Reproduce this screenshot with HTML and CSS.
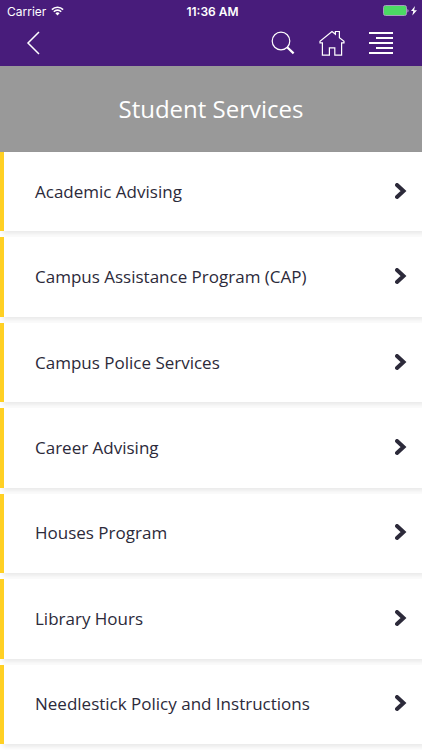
FILE: index.html
```html
<!DOCTYPE html>
<html lang="en">
<head>
  <meta charset="utf-8">
  <meta name="viewport" content="width=device-width, initial-scale=1">
  <title>Student Services</title>
  <link rel="stylesheet" href="styles.css">
</head>
<body>
  <header class="top-bar">
    <div class="status-bar">
      <div class="status-left">
        <span>Carrier</span>
        <svg class="wifi-icon" viewBox="0 0 13 10">
          <path d="M0.9 3.6a8 8 0 0 1 11.2 0M2.8 5.7a5.2 5.2 0 0 1 7.4 0" fill="none" stroke="#fff" stroke-width="1.6"/>
          <path d="M4.4 7.3a3 3 0 0 1 4.2 0L6.5 9.6z" fill="#fff"/>
        </svg>
      </div>
      <div class="status-time">11:36 AM</div>
      <div class="status-right">
        <svg class="battery-icon" viewBox="0 0 36 12">
          <rect x="1.5" y="0.5" width="23" height="10" rx="2" fill="#4cd964" stroke="#a79bc0"/>
          <path d="M25.500 4v3.500a2 2 0 0 0 0-3.500z" fill="#c8bed8"/>
          <path d="M33 1L29 6h2.300l-1 4.500L35 5.200h-2.900z" fill="#fff"/>
        </svg>
      </div>
    </div>
    <nav class="nav-bar">
      <button class="nav-button back-button" aria-label="Back">
        <svg width="14" height="24" viewBox="0 0 14 24"><path d="M13 1L2 12l11 11"/></svg>
      </button>
      <button class="nav-button" aria-label="Search">
        <svg width="24" height="24" viewBox="0 0 24 24">
          <circle cx="10" cy="10" r="8.8" stroke-width="1.2"/>
          <path d="M16.2 16.2l6.4 6.2" stroke-width="2.2"/>
        </svg>
      </button>
      <button class="nav-button" aria-label="Home">
        <svg width="26" height="26" viewBox="0 0 26 26">
          <path d="M3.400 12.800H1V11.300L13 1.500l3.400 2.800V1.500h4v6.200l4.600 3.600v1.500h-2.400v12.400h-6.800v-7.400h-5.400v7.400H3.400z" stroke-width="1.2"/>
        </svg>
      </button>
      <button class="nav-button" aria-label="Menu">
        <svg width="24" height="24" viewBox="0 0 24 24">
          <path d="M0 2h24M7 7h17M0 12h24M7 17h17M0 22h24" stroke-width="2"/>
        </svg>
      </button>
    </nav>
  </header>

  <h1 class="page-title">Student Services</h1>

  <main class="service-list">
    <a class="service-item" href="#">
      <span>Academic Advising</span>
      <svg class="chevron" viewBox="0 0 12 18"><path d="M2 2l6.500 6L2 14"/></svg>
    </a>
    <a class="service-item" href="#">
      <span>Campus Assistance Program (CAP)</span>
      <svg class="chevron" viewBox="0 0 12 18"><path d="M2 2l6.500 6L2 14"/></svg>
    </a>
    <a class="service-item" href="#">
      <span>Campus Police Services</span>
      <svg class="chevron" viewBox="0 0 12 18"><path d="M2 2l6.500 6L2 14"/></svg>
    </a>
    <a class="service-item" href="#">
      <span>Career Advising</span>
      <svg class="chevron" viewBox="0 0 12 18"><path d="M2 2l6.500 6L2 14"/></svg>
    </a>
    <a class="service-item" href="#">
      <span>Houses Program</span>
      <svg class="chevron" viewBox="0 0 12 18"><path d="M2 2l6.500 6L2 14"/></svg>
    </a>
    <a class="service-item" href="#">
      <span>Library Hours</span>
      <svg class="chevron" viewBox="0 0 12 18"><path d="M2 2l6.500 6L2 14"/></svg>
    </a>
    <a class="service-item" href="#">
      <span>Needlestick Policy and Instructions</span>
      <svg class="chevron" viewBox="0 0 12 18"><path d="M2 2l6.500 6L2 14"/></svg>
    </a>
  </main>
</body>
</html>
```
FILE: styles.css
```css
* {
  box-sizing: border-box;
}

body {
  display: flex;
  flex-direction: column;
  min-height: 100vh;
  margin: 0;
  background-color: #fff;
  color: #2c2a3a;
  font-family: "Open Sans", sans-serif;
}

.top-bar {
  background-color: #481c7b;
  color: #fff;
}

.status-bar {
  display: grid;
  grid-template-columns: 1fr auto 1fr;
  align-items: center;
  height: 22px;
  padding: 0 4px 0 7px;
  font-family: Inter, sans-serif;
  font-size: 12px;
}

.status-left {
  display: flex;
  align-items: center;
  gap: 5px;
}

.status-time {
  font-weight: 600;
}

.status-right {
  display: flex;
  justify-content: flex-end;
}

.wifi-icon {
  width: 13px;
  height: 10px;
}

.battery-icon {
  width: 36px;
  height: 12px;
}

.nav-bar {
  display: flex;
  align-items: center;
  gap: 24px;
  height: 44px;
  padding: 0 29px 2px 26px;
}

.nav-button {
  display: flex;
  padding: 0;
  border: none;
  background: none;
  cursor: pointer;
}

.nav-button svg {
  fill: none;
  stroke: #fff;
  stroke-width: 1.5;
}

.back-button {
  margin-right: auto;
}

.page-title {
  margin: 0;
  padding: 27px 16px;
  background-color: #999;
  color: #fff;
  font-size: 24px;
  font-weight: 500;
  line-height: 32px;
  text-align: center;
}

.service-list {
  flex: 1;
  display: grid;
  grid-auto-rows: 1fr;
  gap: 6px;
  padding-bottom: 6px;
}

.service-item {
  display: flex;
  align-items: center;
  justify-content: space-between;
  min-height: 72px;
  padding: 0 15px 0 31px;
  border-left: 4px solid #ffd024;
  box-shadow: 3px 3px 5px rgba(0, 0, 0, 0.09);
  background-color: #fff;
  color: inherit;
  font-size: 17px;
  font-weight: 500;
  line-height: 24px;
  text-decoration: none;
}

.chevron {
  flex: none;
  width: 12px;
  height: 18px;
  fill: none;
  stroke: #2c2a3a;
  stroke-width: 4;
  stroke-linecap: round;
}
```
